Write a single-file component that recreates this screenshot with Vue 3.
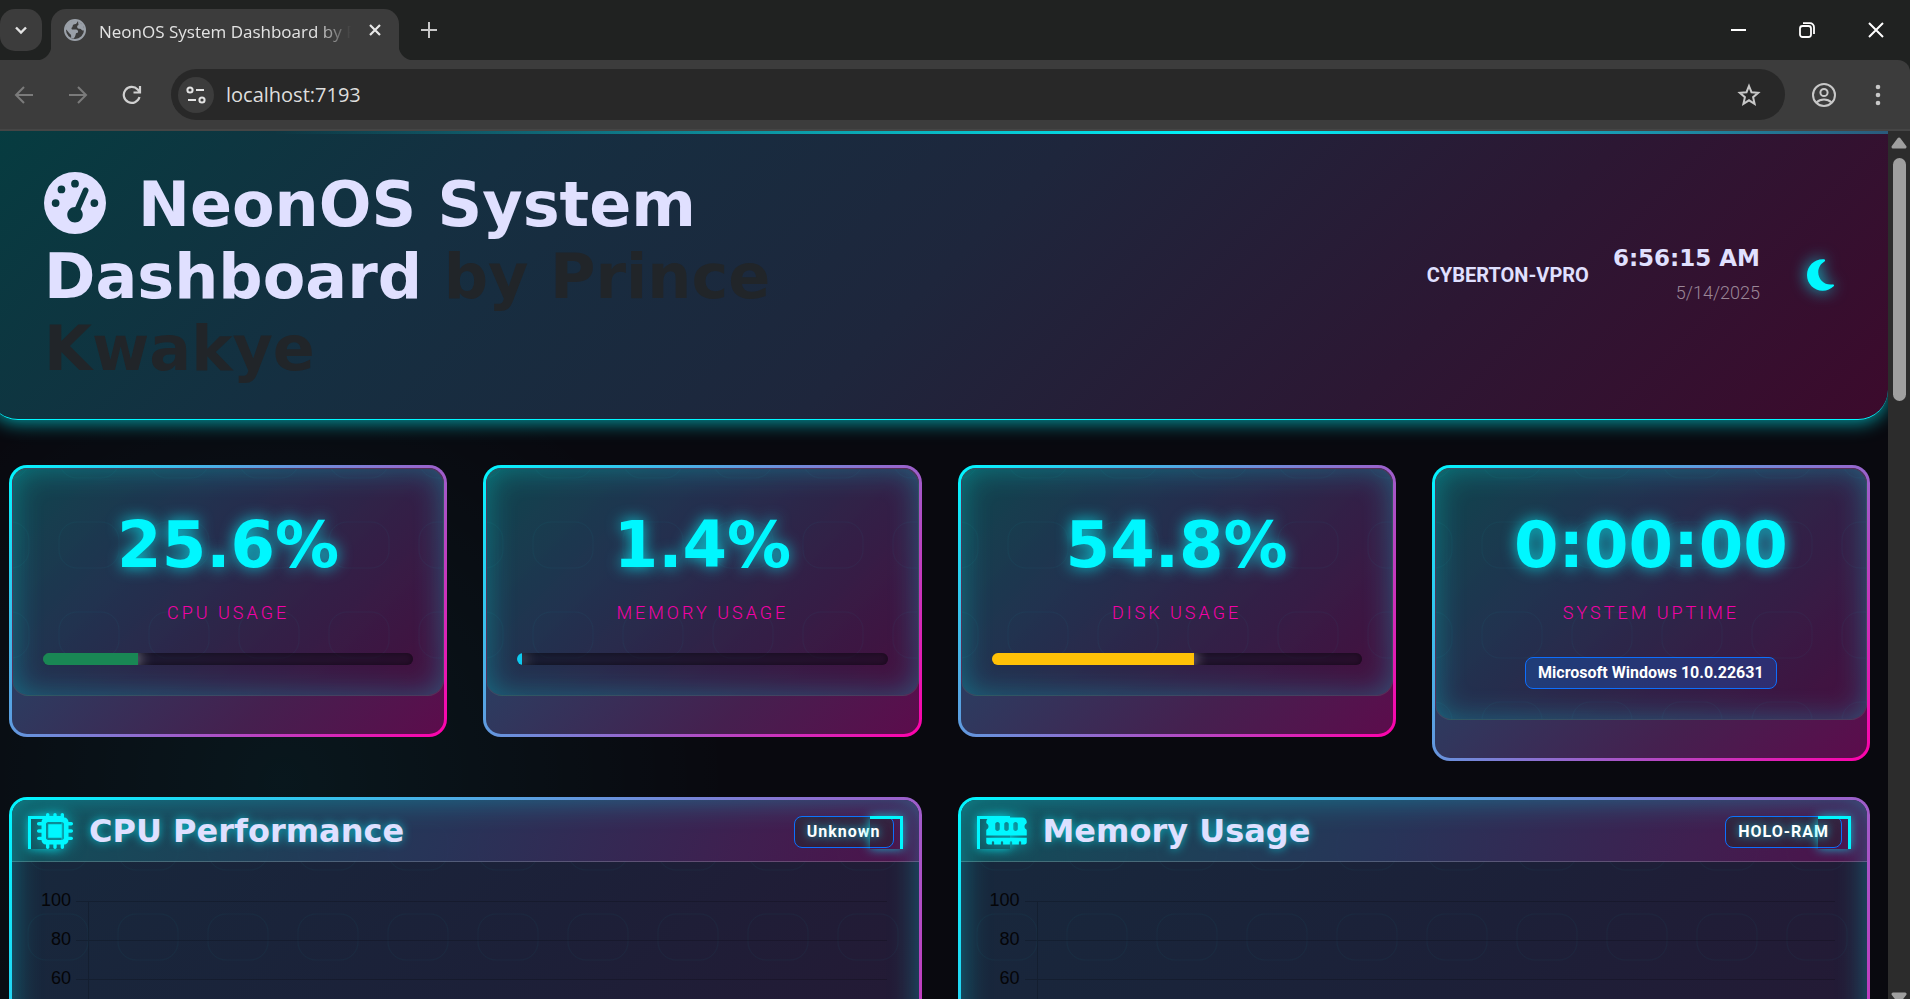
<script setup>
const stats = [
  { value: '25.6%', label: 'CPU Usage', percent: 25.6, tone: 'green' },
  { value: '1.4%', label: 'Memory Usage', percent: 1.4, tone: 'blue' },
  { value: '54.8%', label: 'Disk Usage', percent: 54.8, tone: 'amber' },
  { value: '0:00:00', label: 'System Uptime', badge: 'Microsoft Windows 10.0.22631' },
]

const chip =
  'M176 24c0-13.3-10.7-24-24-24s-24 10.7-24 24V64c-35.3 0-64 28.7-64 64H24c-13.3 0-24 10.7-24 24s10.7 24 24 24H64v56H24c-13.3 0-24 10.7-24 24s10.7 24 24 24H64v56H24c-13.3 0-24 10.7-24 24s10.7 24 24 24H64c0 35.3 28.7 64 64 64v40c0 13.3 10.7 24 24 24s24-10.7 24-24V448h56v40c0 13.3 10.7 24 24 24s24-10.7 24-24V448h56v40c0 13.3 10.7 24 24 24s24-10.7 24-24V448c35.3 0 64-28.7 64-64h40c13.3 0 24-10.7 24-24s-10.7-24-24-24H448V280h40c13.3 0 24-10.7 24-24s-10.7-24-24-24H448V176h40c13.3 0 24-10.7 24-24s-10.7-24-24-24H448c0-35.3-28.7-64-64-64V24c0-13.3-10.7-24-24-24s-24 10.7-24 24V64H280V24c0-13.3-10.7-24-24-24s-24 10.7-24 24V64H176V24zM160 128H352c17.7 0 32 14.3 32 32V352c0 17.7-14.3 32-32 32H160c-17.7 0-32-14.3-32-32V160c0-17.7 14.3-32 32-32zm192 32H160V352H352V160z'
const memory =
  'M64 64C28.7 64 0 92.7 0 128v7.4c0 6.8 4.4 12.6 10.1 16.3C23.3 160.3 32 175.1 32 192s-8.7 31.7-21.9 40.3C4.4 236 0 241.8 0 248.6V320H576V248.6c0-6.8-4.4-12.6-10.1-16.3C552.7 223.7 544 208.9 544 192s8.7-31.7 21.9-40.3c5.7-3.7 10.1-9.5 10.1-16.3V128c0-35.3-28.7-64-64-64H64zM576 352H0v64c0 17.7 14.3 32 32 32H80V416c0-8.8 7.2-16 16-16s16 7.2 16 16v32h96V416c0-8.8 7.2-16 16-16s16 7.2 16 16v32h96V416c0-8.8 7.2-16 16-16s16 7.2 16 16v32h96V416c0-8.8 7.2-16 16-16s16 7.2 16 16v32h48c17.7 0 32-14.3 32-32V352zM192 160v64c0 17.7-14.3 32-32 32s-32-14.3-32-32V160c0-17.7 14.3-32 32-32s32 14.3 32 32zm128 0v64c0 17.7-14.3 32-32 32s-32-14.3-32-32V160c0-17.7 14.3-32 32-32s32 14.3 32 32zm128 0v64c0 17.7-14.3 32-32 32s-32-14.3-32-32V160c0-17.7 14.3-32 32-32s32 14.3 32 32z'

const panels = [
  { title: 'CPU Performance', badge: 'Unknown', icon: chip, box: '0 0 512 512', width: 36 },
  { title: 'Memory Usage', badge: 'HOLO-RAM', icon: memory, box: '0 0 576 512', width: 41 },
]
const ticks = [100, 80, 60]
</script>

<template>
  <div class="window">
    <div class="tabstrip">
      <button class="tab-search" aria-label="Search tabs">
        <svg width="16" height="16" viewBox="0 0 16 16"><path d="M3 5.5l5 5 5-5" fill="none" stroke="#e3e3e3" stroke-width="2.4" /></svg>
      </button>
      <div class="tab">
        <svg class="favicon" width="22" height="22" viewBox="0 0 22 22">
          <circle cx="11" cy="11" r="10" fill="#3c3c3c" stroke="#9aa0a8" stroke-width="2" />
          <path d="M1.5 10C2 5 6 1.500 11 1.500c1 0 2 .2 2.500.5-.2 2-1 3-3 3.200C9 5.500 8.500 6.500 8.500 8c-1 .5-1.500 1.500-.5 2.500h4c1.500 0 2.500 1.500 2 3l-2 .8c-.5 1.700-.5 3.500-2.500 5.200l-2.500-.8c.5-2 0-3.500-1.500-4.200C4 13 3 11 1.500 10z" fill="#9aa0a8" />
          <path d="M14 2l5 4 1.500 5c-1 1-3 .5-3.500-1l-3-.5c-1.500-1-1-3 .5-3.500z" fill="#9aa0a8" />
        </svg>
        <span class="tab-title">NeonOS System Dashboard by Prince</span>
        <button class="icon-button" aria-label="Close tab">
          <svg width="12" height="12" viewBox="0 0 12 12"><path d="M1 1l10 10M11 1L1 11" stroke="#e8e8e8" stroke-width="2.200" /></svg>
        </button>
      </div>
      <button class="icon-button new-tab" aria-label="New tab">
        <svg width="16" height="16" viewBox="0 0 16 16"><path d="M8 0v16M0 8h16" stroke="#c8c8c8" stroke-width="2" /></svg>
      </button>
      <div class="window-controls">
        <button class="icon-button" aria-label="Minimize">
          <svg width="15" height="16" viewBox="0 0 15 16"><path d="M0 8h15" stroke="#fff" stroke-width="2" /></svg>
        </button>
        <button class="icon-button" aria-label="Restore">
          <svg width="16" height="16" viewBox="0 0 16 16" fill="none" stroke="#fff" stroke-width="1.800"><rect x="1" y="4" width="11" height="11" rx="2.500" /><path d="M4 1.200h7a4 4 0 0 1 4 4V12" /></svg>
        </button>
        <button class="icon-button" aria-label="Close">
          <svg width="16" height="16" viewBox="0 0 16 16"><path d="M1 1l14 14M15 1L1 15" stroke="#fff" stroke-width="2" /></svg>
        </button>
      </div>
    </div>

    <div class="toolbar-wrap">
      <div class="toolbar">
        <div class="nav">
          <button class="icon-button" aria-label="Back">
            <svg width="20" height="20" viewBox="0 0 20 20" fill="none" stroke="#7b7b7b" stroke-width="2"><path d="M19 10H2M10 2l-8 8 8 8" /></svg>
          </button>
          <button class="icon-button" aria-label="Forward">
            <svg width="20" height="20" viewBox="0 0 20 20" fill="none" stroke="#7b7b7b" stroke-width="2"><path d="M1 10h17M10 2l8 8-8 8" /></svg>
          </button>
          <button class="icon-button" aria-label="Reload">
            <svg width="20" height="20" viewBox="0 0 20 20" fill="none" stroke="#d0d0d0" stroke-width="2.200"><path d="M17.500 12a8 8 0 1 1-1.800-7.500L17.500 6.500M18 1v6.500h-6.500" /></svg>
          </button>
        </div>
        <div class="address">
          <button class="site-info" aria-label="View site information">
            <svg width="20" height="20" viewBox="0 0 20 20" fill="none" stroke="#e3e3e3" stroke-width="2"><circle cx="4" cy="5" r="2.600" /><path d="M10 5h8M2 15h8" /><circle cx="16" cy="15" r="2.600" /></svg>
          </button>
          <input class="url" type="text" value="localhost:7193" aria-label="Address" />
          <button class="icon-button" aria-label="Bookmark this page">
            <svg width="24" height="24" viewBox="0 0 24 24"><path d="M12 3l2.500 6.200 6.700.6-5.100 4.400 1.500 6.600L12 17.300l-5.600 3.500 1.500-6.600-5.100-4.400 6.700-.6z" fill="none" stroke="#c8c8c8" stroke-width="2" /></svg>
          </button>
        </div>
        <button class="icon-button profile" aria-label="Profile">
          <svg width="24" height="24" viewBox="0 0 24 24" fill="none" stroke="#c8c8c8" stroke-width="2"><circle cx="12" cy="12" r="11" /><circle cx="12" cy="9.500" r="3.600" /><path d="M4.500 19.500c4-4 11-4 15 0" /></svg>
        </button>
        <button class="icon-button menu" aria-label="Menu">
          <svg width="6" height="22" viewBox="0 0 6 22" fill="#c8c8c8"><circle cx="3" cy="3" r="2.300" /><circle cx="3" cy="11" r="2.300" /><circle cx="3" cy="19" r="2.300" /></svg>
        </button>
      </div>
    </div>

    <div class="viewport">
      <main class="page">
        <header class="hero">
          <h1 class="hero-title">
            <svg class="gauge" viewBox="0 0 512 512" fill="currentColor"><path fill-rule="evenodd" d="M0 256a256 256 0 1 1 512 0A256 256 0 1 1 0 256zM288 96a32 32 0 1 0 -64 0 32 32 0 1 0 64 0zM256 416c35.3 0 64-28.7 64-64c0-17.4-6.9-33.1-18.1-44.6L366 161.7c5.3-12.1-.2-26.3-12.3-31.6s-26.3 .2-31.6 12.3L257.9 288c-.6 0-1.3 0-1.9 0c-35.3 0-64 28.7-64 64s28.7 64 64 64zM176 144a32 32 0 1 0 -64 0 32 32 0 1 0 64 0zM96 288a32 32 0 1 0 0-64 32 32 0 1 0 0 64zm352-32a32 32 0 1 0 -64 0 32 32 0 1 0 64 0z" /></svg>NeonOS System Dashboard <span class="author">by Prince Kwakye</span>
          </h1>
          <div class="hero-side">
            <strong class="host">CYBERTON-VPRO</strong>
            <div class="clock">
              <div class="time">6:56:15 AM</div>
              <div class="date">5/14/2025</div>
            </div>
            <button class="theme" aria-label="Toggle theme">
              <svg width="27" height="36" viewBox="0 0 384 512"><path fill="#00f7ff" d="M223.5 32C100 32 0 132.3 0 256S100 480 223.5 480c60.6 0 115.5-24.2 155.8-63.4c5-4.900 6.300-12.500 3.100-18.700s-10.100-9.700-17-8.500c-9.800 1.700-19.800 2.600-30.100 2.600c-96.900 0-175.500-78.800-175.500-176c0-65.800 36-123.100 89.300-153.300c6.100-3.500 9.200-10.500 7.700-17.300s-7.300-11.900-14.300-12.500c-6.300-.5-12.600-.8-19-.8z" /></svg>
            </button>
          </div>
        </header>

        <section class="stats">
          <article v-for="(s, i) in stats" :key="s.label" class="neon">
            <div class="stat">
              <svg class="texture" aria-hidden="true">
                <defs>
                  <pattern :id="'stat-cells-' + i" x="45" y="52" width="90" height="90" patternUnits="userSpaceOnUse">
                    <rect x="1" y="1" width="60" height="46" rx="18" />
                  </pattern>
                </defs>
                <rect width="100%" height="100%" :fill="'url(#stat-cells-' + i + ')'" />
              </svg>
              <div class="stat-value">{{ s.value }}</div>
              <div class="stat-label">{{ s.label }}</div>
              <div v-if="s.tone" class="meter" role="progressbar" :aria-label="s.label" :aria-valuenow="s.percent">
                <div class="meter-fill" :class="s.tone" :style="{ width: s.percent + '%' }"></div>
              </div>
              <span v-else class="badge os-badge">{{ s.badge }}</span>
            </div>
          </article>
        </section>

        <section class="panels">
          <article v-for="(p, i) in panels" :key="p.title" class="neon panel">
            <svg class="texture" aria-hidden="true">
              <defs>
                <pattern :id="'panel-cells-' + i" x="15" y="23" width="90" height="90" patternUnits="userSpaceOnUse">
                  <rect x="1" y="1" width="60" height="46" rx="18" />
                </pattern>
              </defs>
              <rect width="100%" height="100%" :fill="'url(#panel-cells-' + i + ')'" />
            </svg>
            <div class="panel-head">
              <svg class="panel-icon" :width="p.width" height="36" :viewBox="p.box"><path :d="p.icon" fill="#00f7ff" fill-rule="evenodd" /></svg>
              <h2 class="panel-title">{{ p.title }}</h2>
              <span class="badge head-badge">{{ p.badge }}</span>
            </div>
            <div class="chart">
              <div v-for="t in ticks" :key="t" class="tick-row">
                <span class="tick-label">{{ t }}</span>
                <span class="tick-mark"></span>
                <span class="tick-cell"></span>
              </div>
            </div>
          </article>
        </section>
      </main>

      <div class="scrollbar" aria-hidden="true">
        <svg width="16" height="12" viewBox="0 0 16 12"><path d="M8 2l6 8H2z" fill="#9f9f9f" stroke="#9f9f9f" stroke-width="3" stroke-linejoin="round" /></svg>
        <div class="track"><div class="thumb"></div></div>
        <svg class="arrow-down" width="16" height="12" viewBox="0 0 16 12"><path d="M8 10l6-8H2z" fill="#9f9f9f" stroke="#9f9f9f" stroke-width="3" stroke-linejoin="round" /></svg>
      </div>
    </div>
  </div>
</template>

<style>
body {
  background: #09090f;
  overflow: hidden;
}
</style>

<style scoped>
* {
  box-sizing: border-box;
}
button,
input {
  border: 0;
  padding: 0;
  background: none;
  font: inherit;
}
svg {
  display: block;
  flex: none;
}
.window {
  display: flex;
  flex-direction: column;
  height: 100vh;
  overflow: hidden;
  font-family: Roboto, "Liberation Sans", sans-serif;
}

/* Browser chrome */
.icon-button {
  display: flex;
  align-items: center;
  justify-content: center;
}
.tabstrip {
  display: flex;
  height: 60px;
  padding-top: 9px;
  background: #202221;
}
.tab-search {
  display: flex;
  align-items: center;
  justify-content: center;
  width: 42px;
  height: 42px;
  border-radius: 15px;
  background: #3c3c3c;
}
.tab {
  position: relative;
  display: flex;
  align-items: center;
  width: 348px;
  margin-left: 9px;
  padding: 0 18px 9px 13px;
  border-radius: 15px 15px 0 0;
  background: #3c3c3c;
}
.tab::before,
.tab::after {
  content: "";
  position: absolute;
  bottom: 0;
  width: 15px;
  height: 15px;
}
.tab::before {
  left: -15px;
  background: radial-gradient(circle at 0 0, transparent 15px, #3c3c3c 16px);
}
.tab::after {
  right: -15px;
  background: radial-gradient(circle at 100% 0, transparent 15px, #3c3c3c 16px);
}
.tab-title {
  width: 252px;
  margin: 0 auto 0 13px;
  padding-top: 3px;
  overflow: hidden;
  white-space: nowrap;
  font: 17px/26px "Open Sans", sans-serif;
  color: #e3e3e3;
  mask-image: linear-gradient(90deg, #000 86%, transparent);
}
.new-tab {
  height: 42px;
  margin-left: 22px;
}
.window-controls {
  display: flex;
  gap: 53px;
  height: 42px;
  margin-left: auto;
  padding-right: 26px;
}
.toolbar-wrap {
  background: #202221;
}
.toolbar {
  display: flex;
  align-items: center;
  height: 71px;
  padding: 9px 29px 9px 14px;
  border-bottom: 2px solid #454545;
  border-radius: 0 12px 0 0;
  background: #3c3c3c;
}
.nav {
  display: flex;
  gap: 34px;
}
.address {
  display: flex;
  flex: 1;
  align-items: center;
  height: 51px;
  margin-left: 29px;
  padding: 0 24px 0 7px;
  border-radius: 26px;
  background: #282828;
}
.site-info {
  display: flex;
  align-items: center;
  justify-content: center;
  width: 36px;
  height: 36px;
  border-radius: 50%;
  background: #3c3c3c;
}
.url {
  flex: 1;
  min-width: 0;
  margin-left: 12px;
  font: 20px/28px "Open Sans", sans-serif;
  color: #dedede;
}
.profile {
  margin-left: 27px;
}
.menu {
  margin-left: 39px;
}

/* Page */
.viewport {
  display: flex;
  flex: 1;
  min-height: 0;
}
.page {
  flex: 1;
  min-width: 0;
  overflow: hidden;
  background:
    radial-gradient(circle at 15% 75%, rgba(0, 247, 255, 0.06), transparent 26%),
    #09090f;
}
.scrollbar {
  display: flex;
  flex-direction: column;
  align-items: center;
  width: 22px;
  padding-top: 6px;
  background: #2c2c2c;
}
.track {
  flex: 1;
  padding: 9px 0;
}
.thumb {
  width: 13px;
  height: 243px;
  border-radius: 7px;
  background: #9f9f9f;
}
.arrow-down {
  margin-bottom: -5px;
}
.hero {
  position: relative;
  display: flex;
  align-items: center;
  justify-content: space-between;
  margin-left: -12px;
  padding: 34px 36px 34px 56px;
  border-bottom: 1px solid #00f7ff;
  border-radius: 0 0 30px 30px;
  background: linear-gradient(135deg, #063c40 0%, #152f41 25%, #1e263c 50%, #2c1733 75%, #3c0a2c 100%);
  box-shadow: 0 3px 18px rgba(0, 247, 255, 0.6);
}
.hero::before {
  content: "";
  position: absolute;
  inset: 0 0 auto;
  height: 3px;
  background: linear-gradient(90deg, transparent 15%, #00f7ff 65%, #2a5a7c 100%);
}
.hero-title {
  width: 50%;
  margin: 0;
  padding-top: 4px;
  font: bold 62px/72px "DejaVu Sans", sans-serif;
  color: #e0e0ff;
}
.gauge {
  display: inline-block;
  width: 62px;
  height: 62px;
  margin-right: 32px;
  vertical-align: -8px;
}
.author {
  color: #212529;
}
.hero-side {
  display: flex;
  align-items: center;
  color: #e0e0ff;
}
.host {
  font-size: 20px;
  line-height: 30px;
}
.clock {
  margin-left: 24px;
  text-align: right;
}
.time {
  font: bold 23px/36px "DejaVu Sans", sans-serif;
}
.date {
  font-size: 18px;
  font-weight: 300;
  line-height: 34px;
  color: #9b8697;
}
.theme {
  margin-left: 29px;
  padding: 0 18px;
}
.theme svg {
  filter: drop-shadow(0 0 8px rgba(0, 247, 255, 0.8));
}

.stats,
.panels {
  display: grid;
  gap: 36px;
  align-items: start;
  padding: 0 18px 0 9px;
}
.stats {
  grid-template-columns: repeat(4, minmax(0, 1fr));
  margin-top: 45px;
}
.panels {
  grid-template-columns: repeat(2, minmax(0, 1fr));
  margin-top: 36px;
}
.neon {
  position: relative;
  border: 3px solid transparent;
  border-radius: 18px;
  background:
    linear-gradient(135deg, #14545c 0%, #2c3c60 32%, #45204f 70%, #5c0c4c 100%) padding-box,
    linear-gradient(135deg, #00f7ff, #ff00aa) border-box;
}
.texture {
  position: absolute;
  inset: 0;
  width: 100%;
  height: 100%;
}
.texture pattern rect {
  fill: none;
  stroke: rgba(0, 247, 255, 0.03);
}
.stat {
  position: relative;
  margin-bottom: 38px;
  padding: 30px;
  border: 1px solid rgba(255, 255, 255, 0.12);
  border-radius: 16px;
  text-align: center;
  background: linear-gradient(135deg, rgba(15, 68, 76, 0.9) 0%, rgba(32, 50, 78, 0.9) 32%, rgba(48, 33, 70, 0.9) 62%, rgba(68, 14, 62, 0.9) 100%);
  box-shadow: inset 0 0 30px rgba(0, 247, 255, 0.3);
}
.stat-value {
  position: relative;
  font: bold 64px/92px "DejaVu Sans", sans-serif;
  color: #00f7ff;
  text-shadow: 0 0 15px rgba(0, 247, 255, 0.8);
}
.stat-label {
  margin-top: 8px;
  font-size: 18px;
  font-weight: 300;
  line-height: 28px;
  letter-spacing: 3px;
  text-transform: uppercase;
  color: #f500a6;
}
.meter {
  position: relative;
  height: 12px;
  margin-top: 26px;
  border-radius: 6px;
  overflow: hidden;
  background: rgba(16, 10, 24, 0.5);
  box-shadow: inset 0 0 6px rgba(0, 0, 0, 0.4);
}
.meter-fill {
  height: 100%;
  box-shadow: 0 0 15px rgba(255, 255, 255, 0.7);
}
.green {
  background: #198754;
}
.blue {
  background: #0dcaf0;
}
.amber {
  background: #ffc107;
}
.badge {
  display: inline-block;
  padding: 0 12px;
  border: 1px solid #0d6efd;
  border-radius: 8px;
  font-weight: 700;
  line-height: 30px;
  color: #fff;
}
.os-badge {
  display: block;
  width: fit-content;
  margin: 30px auto 0;
  font-size: 16px;
  background: rgba(13, 110, 253, 0.25);
}

.panel {
  min-height: 560px;
  background:
    linear-gradient(135deg, #17293d 0%, #1c2038 45%, #2a1533 100%) padding-box,
    linear-gradient(135deg, #00f7ff, #ff00aa) border-box;
}
.panel::after {
  content: "";
  position: absolute;
  inset: 0;
  border-radius: 15px;
  box-shadow: inset 0 0 30px rgba(0, 247, 255, 0.35);
  pointer-events: none;
}
.panel-head {
  position: relative;
  display: flex;
  align-items: center;
  height: 62px;
  padding: 0 25px;
  border-bottom: 1px solid rgba(255, 255, 255, 0.2);
  border-radius: 15px 15px 0 0;
  background: linear-gradient(110deg, rgba(18, 84, 92, 0.9), rgba(42, 54, 92, 0.9) 48%, rgba(82, 18, 78, 0.9));
}
.panel-head::before,
.panel-head::after {
  content: "";
  position: absolute;
  top: 16px;
  width: 30px;
  height: 30px;
  border-top: 3px solid #00f7ff;
  box-shadow: 0 0 10px rgba(0, 247, 255, 0.7);
}
.panel-head::before {
  left: 16px;
  border-left: 3px solid #00f7ff;
}
.panel-head::after {
  right: 16px;
  border-right: 3px solid #00f7ff;
}
.panel-icon {
  position: relative;
  filter: drop-shadow(0 0 8px rgba(0, 247, 255, 0.6));
}
.panel-title {
  margin: 0 auto 0 16px;
  font: bold 32px/44px "DejaVu Sans", sans-serif;
  color: #e0e0ff;
  text-shadow: 0 0 10px rgba(0, 247, 255, 0.7);
}
.head-badge {
  margin-top: 3px;
  font-size: 16px;
  letter-spacing: 1px;
  background: rgba(33, 37, 41, 0.5);
  text-shadow: 0 0 10px rgba(0, 247, 255, 0.8);
}
.chart {
  position: relative;
  padding: 39px 32px 0 20px;
}
.tick-row {
  display: flex;
  height: 39px;
}
.tick-label {
  width: 39px;
  margin-top: -11px;
  text-align: right;
  font: 18px/20px "Liberation Sans", sans-serif;
  color: #050508;
}
.tick-mark {
  width: 12px;
  margin-left: 5px;
  border-top: 1px solid rgba(0, 0, 0, 0.18);
}
.tick-cell {
  flex: 1;
  border-top: 1px solid rgba(0, 0, 0, 0.18);
  border-left: 1px solid rgba(0, 0, 0, 0.18);
}
</style>
